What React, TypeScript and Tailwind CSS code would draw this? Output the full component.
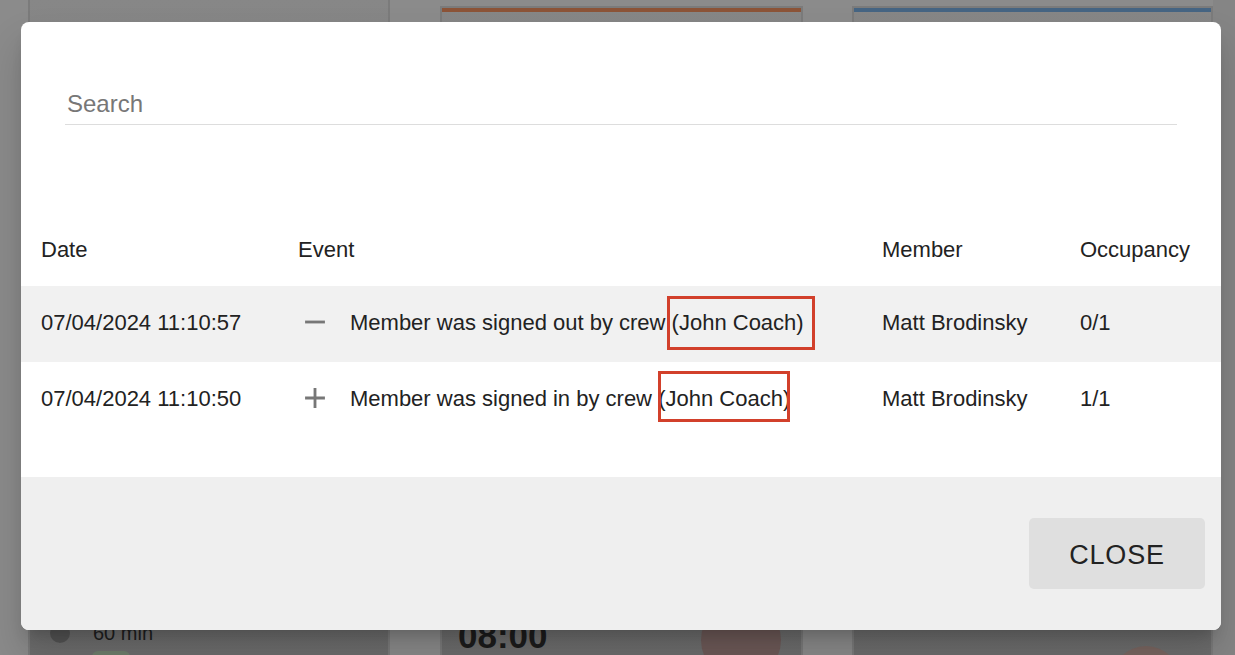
import React from "react";

interface LogRow {
  date: string;
  kind: "in" | "out";
  text: string;
  crew: string;
  member: string;
  occupancy: string;
  shaded: boolean;
  boxClass: string;
}

const rows: LogRow[] = [
  {
    date: "07/04/2024 11:10:57",
    kind: "out",
    text: "Member was signed out by crew",
    crew: "(John Coach)",
    member: "Matt Brodinsky",
    occupancy: "0/1",
    shaded: true,
    boxClass: "-left-[5px] -right-[11px] -top-[14px] -bottom-[14px]",
  },
  {
    date: "07/04/2024 11:10:50",
    kind: "in",
    text: "Member was signed in by crew",
    crew: "(John Coach)",
    member: "Matt Brodinsky",
    occupancy: "1/1",
    shaded: false,
    boxClass: "left-0 right-0 -top-[15px] -bottom-[10px]",
  },
];

const MinusIcon = () => (
  <svg width="34" height="34" viewBox="0 0 24 24" fill="#777777">
    <path d="M19 13H5v-2h14v2z" />
  </svg>
);

const PlusIcon = () => (
  <svg width="34" height="34" viewBox="0 0 24 24" fill="#777777">
    <path d="M19 13h-6v6h-2v-6H5v-2h6V5h2v6h6v2z" />
  </svg>
);

// dimmed page behind the dialog
const Backdrop = () => {
  return (
    <div className="flex h-[655px] w-full bg-[#8b8b8b]">
      <div className="w-[28px] shrink-0" />
      <div className="w-[362px] shrink-0 border-x-2 border-[#7b7b7b] bg-linear-to-b from-[#878787] to-[#6d6d6d] flex flex-col pt-[623px] pl-[20px]">
        <div className="flex items-center gap-[23px] shrink-0">
          <div className="w-[20px] h-[20px] rounded-full bg-[#555555]" />
          <span className="text-[20px] text-[#1e1e1e] leading-[20px]">60 min</span>
        </div>
        <div className="ml-[42px] mt-[8px] w-[38px] h-[14px] shrink-0 rounded-[6px] bg-[#6f7e6c]" />
      </div>
      <div className="w-[50px] shrink-0" />
      <div className="w-[363px] shrink-0 mt-[6px] border-x-2 border-t-2 border-[#7b7b7b] bg-linear-to-b from-[#878787] to-[#6d6d6d] flex flex-col">
        <div className="h-[4px] shrink-0 bg-[#8c5438]" />
        <div className="flex shrink-0 items-start justify-between pt-[606px] pl-[16px] pr-[20px]">
          <span className="text-[35px] font-bold leading-[35px] text-[#1c1c1c]">08:00</span>
          <div className="w-[80px] h-[80px] -mt-[18px] rounded-full bg-[#6e5a58] flex flex-col items-center pt-[8px] gap-[4px]">
            <div className="w-[7px] h-[7px] rounded-full bg-[#3b3333]" />
            <div className="w-[7px] h-[7px] rounded-full bg-[#3b3333]" />
          </div>
        </div>
      </div>
      <div className="w-[49px] shrink-0" />
      <div className="w-[361px] shrink-0 mt-[6px] border-x-2 border-t-2 border-[#7b7b7b] bg-linear-to-b from-[#878787] to-[#6d6d6d] flex flex-col">
        <div className="h-[4px] shrink-0 bg-[#466583]" />
        <div className="mt-[614px] h-[4px] shrink-0 bg-[#5f3f2f]" />
        <div className="flex shrink-0 justify-end pr-[30px] pt-[16px]">
          <div className="w-[70px] h-[70px] rounded-full bg-[#7a6661]" />
        </div>
      </div>
      <div className="flex-1 bg-[#858585]" />
    </div>
  );
};

const App = () => {
  return (
    <div className="relative h-[655px] w-full overflow-hidden font-['Liberation_Sans',Arial,sans-serif]">
      <Backdrop />

      <div className="absolute left-[21px] top-[22px] w-[1200px] h-[608px] rounded-[8px] overflow-hidden bg-white flex flex-col shadow-[0_11px_15px_-7px_rgba(0,0,0,0.2),0_24px_38px_3px_rgba(0,0,0,0.14)]">
        <div className="px-[44px] pt-[63px]">
          <input
            placeholder="Search"
            className="w-full h-[40px] pb-[2px] border-b border-[#dddddd] outline-none text-[24px] pl-[2px] text-[#222222] placeholder:text-[#777777] bg-transparent"
          />
        </div>

        <div className="mt-[87px] text-[22px] text-[#222222]">
          <div className="h-[74px] grid grid-cols-[257px_584px_198px_1fr] items-center pl-[20px]">
            <span>Date</span>
            <span>Event</span>
            <span>Member</span>
            <span>Occupancy</span>
          </div>
          {rows.map((row) => (
            <div
              key={row.date}
              className={
                "h-[76px] grid grid-cols-[257px_584px_198px_1fr] items-center pl-[20px] pb-[4px] " +
                (row.shaded ? "bg-[#f1f1f1]" : "bg-white")
              }
            >
              <span>{row.date}</span>
              <div className="flex items-center">
                <div className="mr-[18px] flex">
                  {row.kind === "out" ? <MinusIcon /> : <PlusIcon />}
                </div>
                <span className="whitespace-nowrap">
                  {row.text}{" "}
                  <span className="relative inline-block leading-[26px]">
                    {row.crew}
                    <span
                      className={
                        "absolute border-[3px] border-[#d2402b] " + row.boxClass
                      }
                    />
                  </span>
                </span>
              </div>
              <span>{row.member}</span>
              <span>{row.occupancy}</span>
            </div>
          ))}
        </div>

        <div className="h-[39px] shrink-0" />

        <div className="flex-1 bg-[#efefef] flex justify-end items-start pt-[41px] pr-[16px]">
          <button className="w-[176px] h-[71px] pt-[3px] rounded-[5px] bg-[#dfdfdf] text-[27px] tracking-[0.02857em] text-[#222222]">
            CLOSE
          </button>
        </div>
      </div>
    </div>
  );
};

export default App;
